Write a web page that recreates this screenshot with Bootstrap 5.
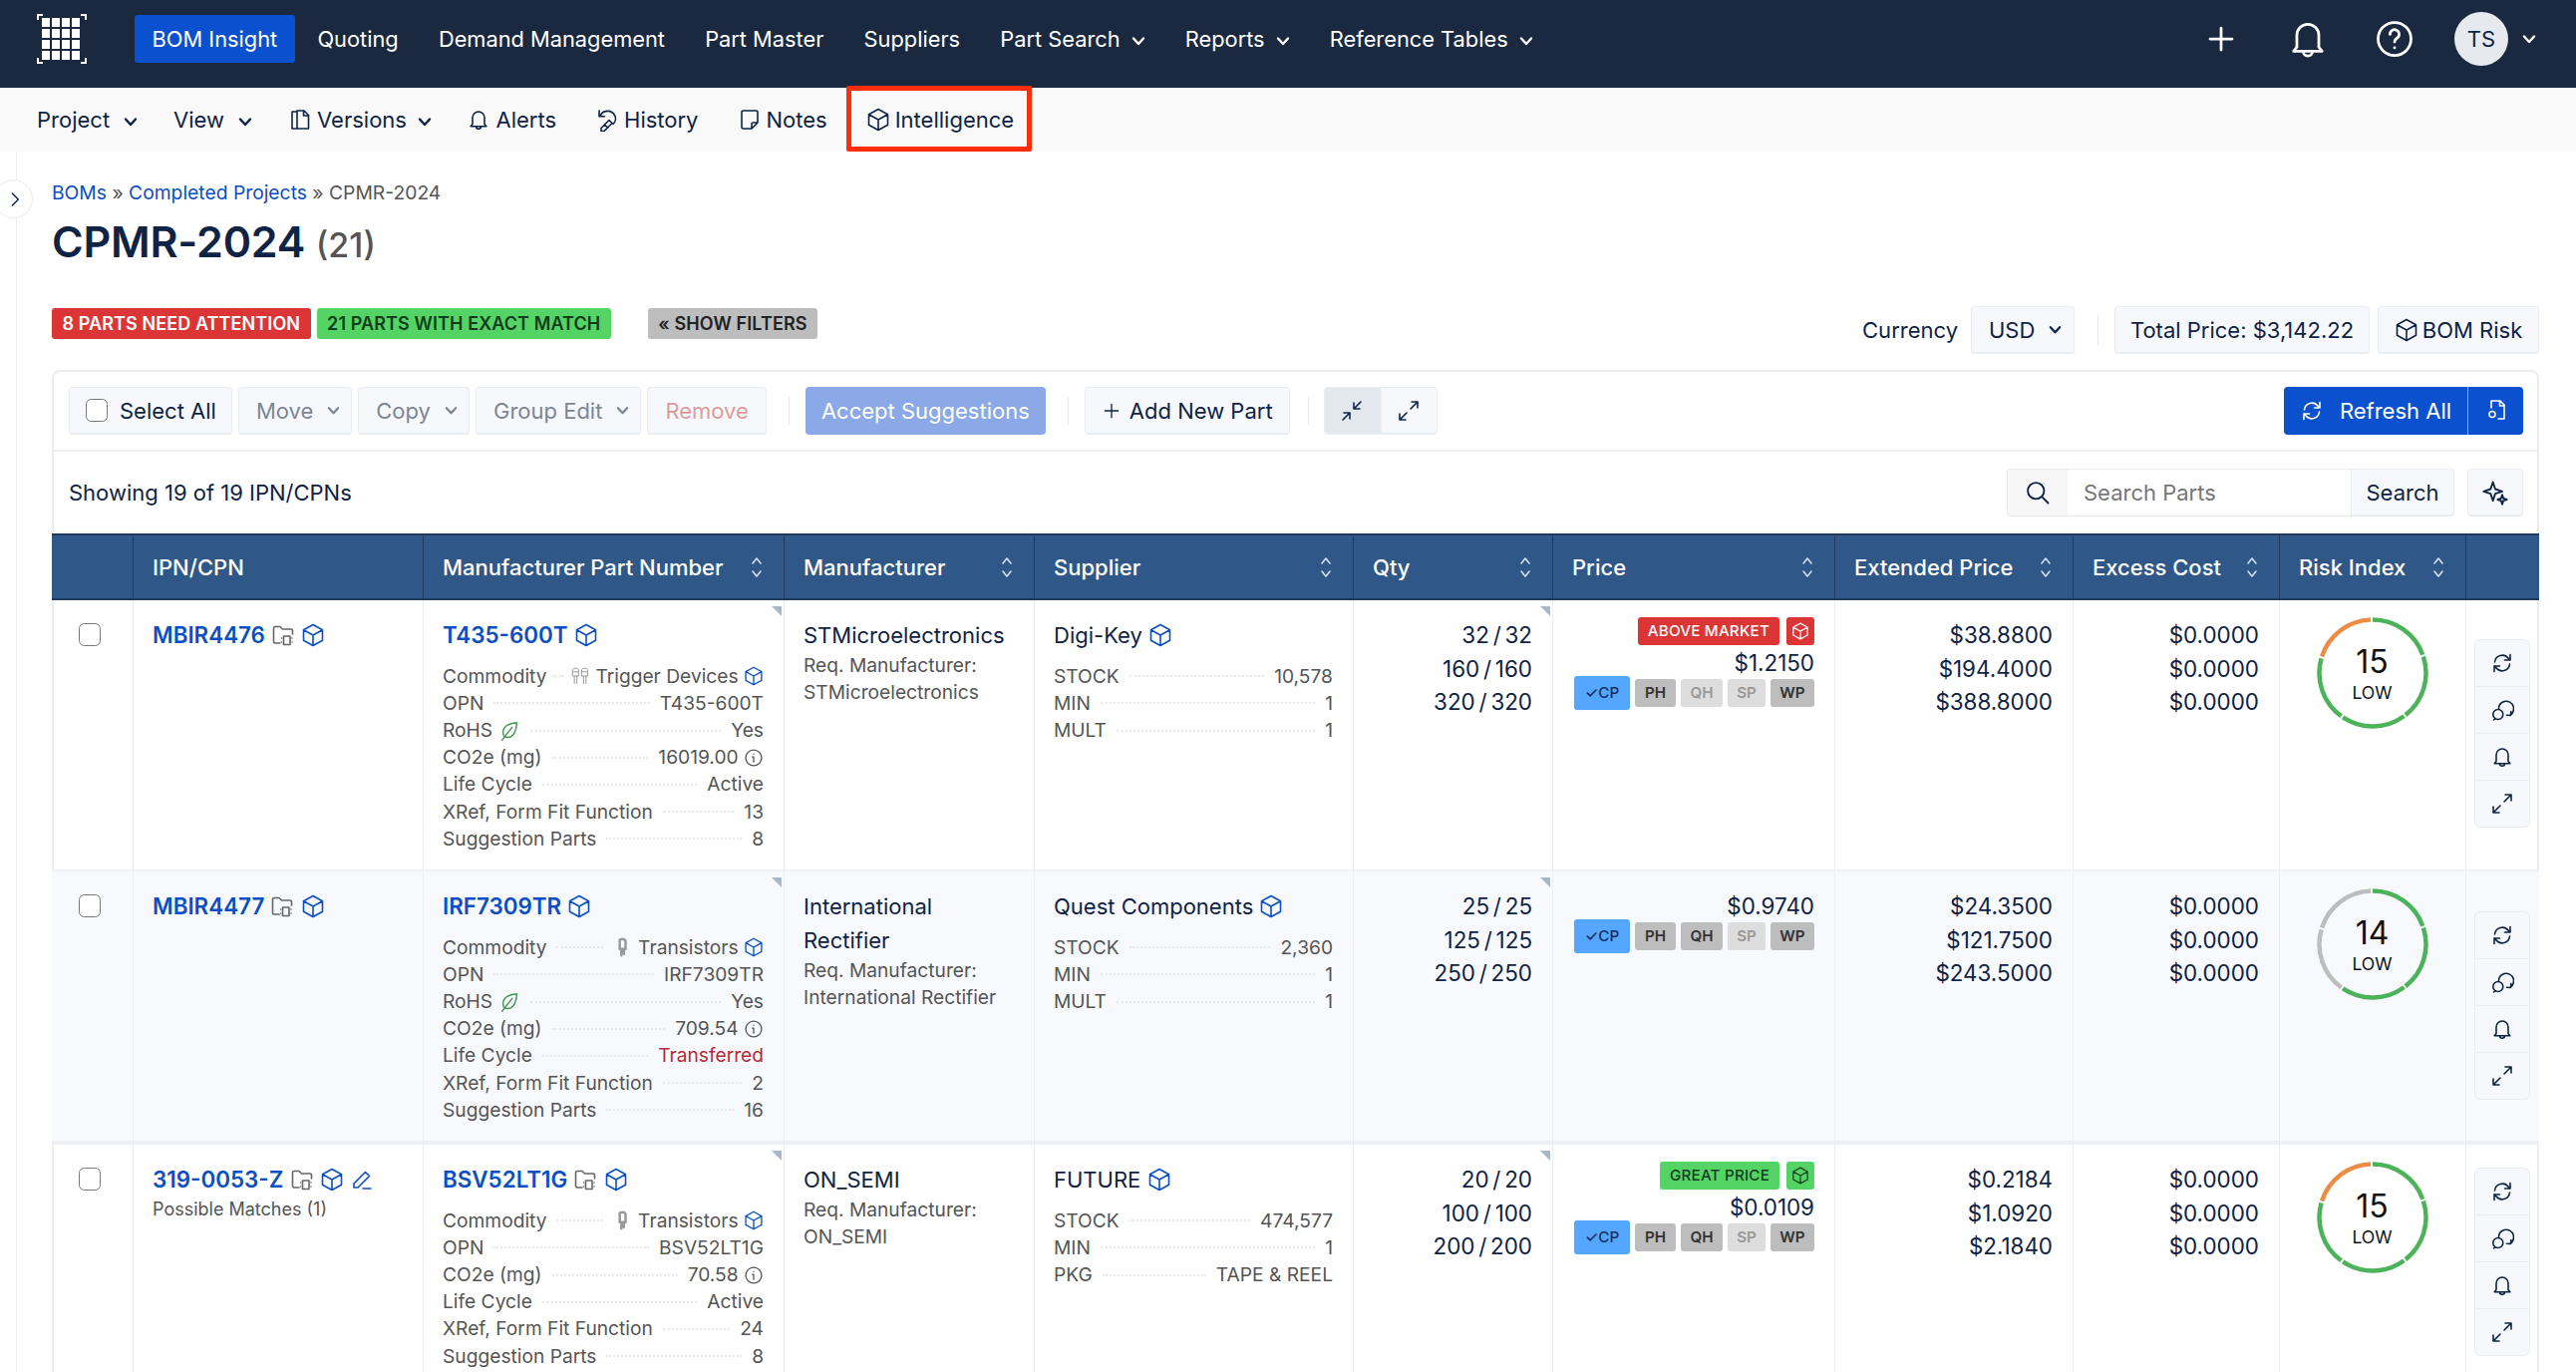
<!doctype html>
<html lang="en">
<head>
<meta charset="utf-8">
<title>CPMR-2024</title>
<link href="https://cdn.jsdelivr.net/npm/bootstrap@5.3.0/dist/css/bootstrap.min.css" rel="stylesheet">
<style>
html,body{height:100%;overflow:hidden}
body{font-family:Inter,"Liberation Sans",sans-serif;font-size:22px;color:#0f2344;background:#fff;line-height:34px}
.ic{width:24px;height:24px;fill:none;stroke:currentColor;stroke-width:1.6;stroke-linecap:round;stroke-linejoin:round;flex:none;vertical-align:-4px}
.chev{width:14px;height:14px;stroke-width:2.4;margin-left:11px;vertical-align:-1px}
.topbar{background:#1a2940;height:88px;padding:0 40px 10px 36px;flex-wrap:nowrap}
.logo-mark{width:52px;height:52px;margin-right:47px;fill:#fff;stroke:none}
.topbar .navbar-nav .nav-link{color:#fff;font-size:21.8px;padding:0 17.6px;margin-right:5px;height:48px;line-height:48px;font-weight:400;border-radius:3px;white-space:nowrap}
.topbar .navbar-nav .nav-link.active{background:#0b50cf;color:#fff}
.tool-ic{color:#fff;width:44px;height:44px;stroke-width:1.5;margin-right:43px}
.avatar-dot{width:54px;height:54px;background:#e6eaee;color:#0f2344;font-size:22px;font-weight:400;margin-left:-5px}
.topbar .chev-end{color:#fff;margin-left:14px}
.subbar{background:#f9f9f9;height:64px;padding-left:19px;flex-wrap:nowrap}
.subbar .nav-link{color:#0f2344;padding:0 18px;line-height:64px;white-space:nowrap}
.subbar .wide .nav-link{padding:0 19.5px}
.subbar .ic{margin-right:5px;width:24px;height:24px}
.subbar .chev{margin-right:0;width:14px;height:14px;margin-left:14px}
.subbar .ver .nav-link{padding-right:16px}
.subbar .ver .chev{margin-left:11px}
.intel{position:relative}
.subbar .intel .ic{margin-right:5px}
.intel::after{content:"";position:absolute;left:0;right:2px;top:-2px;bottom:0;border:5px solid #ff2d0a;border-radius:2px}
.rail-wrap{position:relative;height:calc(100vh - 152px);padding:29px 37px 0 52px}
.rail-line{position:absolute;left:16px;top:0;bottom:0;border-left:1px solid #eee}
.rail-tab{position:absolute;left:-6px;top:28px;width:39px;height:39px;background:#fff;border:1px solid #eaeaea;border-radius:50%;color:#0f2344}
.rail-tab .ic{width:16px;height:16px;stroke-width:2.2;margin-left:2px}
.crumbs{font-size:19.3px;line-height:24px;margin-bottom:10px;color:#555}
.crumbs a{color:#0b4fc4;text-decoration:none}
.page-title{font-size:43px;font-weight:600;line-height:54px;margin:0 0 34px;color:#0f2344;letter-spacing:-.2px}
.page-title span{font-size:34px;font-weight:500;color:#555;letter-spacing:0}
.mt-flags{margin-top:2px}
.flag{font-size:18px;line-height:31px;height:31px;padding:0 10.500px;border-radius:3px;font-weight:600;margin-right:6px;display:inline-block;letter-spacing:.1px;white-space:nowrap}
.flag-red{background:#dc3535;color:#fff}
.flag-green{background:#55d466;color:#123d1c}
.flag-gray{background:#bdbdbd;color:#222;padding:0 10.500px;margin-left:31px;margin-right:0}
.vsep{width:1px;height:30px;background:#e9e9e9;align-self:center;flex:none}
.btn-soft{background:#f6f8fc;border:1px solid #e9ecf1;border-bottom-width:2px;color:#0f2344;font-size:22px;height:48px;line-height:44px;padding:0 17px;border-radius:4px;white-space:nowrap;display:inline-flex;align-items:center}
.btn-soft:hover{background:#eef1f7;color:#0f2344}
.btn-soft .chev{margin-left:14px;margin-right:-6px;width:13px;height:13px}
.select-b{padding:0 15px 0 16px}
.add-b{padding:0 16px}
.add-b .ic{width:20px;height:20px}
.muted-b{color:#7d8695}
.danger-b{color:#df9b9b}
.accept-b{background:#8aa9e6;border-color:#8aa9e6;color:#fff;width:241px;justify-content:center}
.accept-b:hover{background:#8aa9e6;color:#fff}
.page-head{height:47px;margin-bottom:17px}
.cur-label{margin-right:5px}
.usd-b{width:104px}
.total-b{width:256px;justify-content:center}
.risk-b{width:162px;justify-content:center}
.head-sep{margin:0 8px 0 15px}
.tool-card{box-shadow:inset 0 0 0 2px #ececec;border-radius:8px 8px 0 0;overflow:hidden;height:1100px;margin:0}
.tool-row{padding:17px 16px 15px 17px;border-bottom:2px solid #eee;height:82px;gap:6px}
.tool-row .vsep{margin:0 10px 0 16px}
.tool-row .vsep.near{margin:0 9px 0 12px}
.search-row{height:82px;padding:0 16px 0 17px}
.sq-on{background:#e3e8ef}
.group-flush .btn-soft{border-radius:0;width:57px;padding:0;justify-content:center}
.group-flush .btn-soft:first-child{border-radius:4px 0 0 4px}
.group-flush .btn-soft:last-child{border-radius:0 4px 4px 0}
.refresh-main{background:#0b50cf;color:#fff;height:48px;font-size:22px;border:0;border-radius:4px 0 0 4px;width:184px;padding:0;display:inline-flex;align-items:center;justify-content:center;gap:16px}
.refresh-side{background:#0b50cf;color:#fff;height:48px;border:0;border-left:1px solid #8fb0ea;border-radius:0 4px 4px 0;width:56px;padding:0}
.refresh-main:hover,.refresh-side:hover{background:#0b50cf;color:#fff}
.search-group{width:449px;height:48px;flex-wrap:nowrap}
.search-group .input-group-text{background:#f7f7f7;border:1px solid #eaeaea;width:62px;justify-content:center;color:#0f2344;border-radius:4px 0 0 4px;padding:0}
.search-group .input-group-text .ic{width:28px;height:28px}
.search-group .form-control{border:1px solid #eaeaea;border-left:0;border-right:0;font-size:22px;padding:0 16px;color:#0f2344;border-radius:0}
.search-group .form-control::placeholder{color:#777}
.search-group .btn-soft{width:104px;padding:0;justify-content:center;border-radius:0 4px 4px 0}
.spark-b{width:56px;padding:0;justify-content:center;margin-left:13px}
.spark-b .ic{width:28px;height:28px}
.bom-grid{table-layout:fixed;width:2495px;border-collapse:separate;border-spacing:0;margin:0;color:#0f2344;--bs-table-bg:transparent}
.bom-grid thead th{background:#2f5888;color:#fff;height:67px;padding:0 21px 0 19.500px;font-weight:500;font-size:22px;border-top:2px solid #1e3a5f;border-bottom:2px solid #1e3a5f;border-right:1px solid #1e3a5f;vertical-align:middle;white-space:nowrap}
.bom-grid thead th:last-child{border-right:0}
.sort-ic{width:12px;height:26px;stroke:#cfe0f0;stroke-width:1.6;fill:none;stroke-linecap:round;stroke-linejoin:round;flex:none}
.bom-grid tbody td{padding:18px 19.500px 0 19.500px;border-right:1px solid #ebeef2;border-bottom:0;vertical-align:top;position:relative;font-size:22px;color:#0f2344;line-height:34px}
.bom-grid tbody td:last-child{border-right:0}
.bom-grid tbody tr.r-a td{height:272px;box-shadow:inset 0 -2px 0 #eef0f3}
.bom-grid tbody tr.r-b td{height:274px;background:#f7f9fd;box-shadow:inset 0 -4px 0 #eef0f3}
.bom-grid tbody tr.r-c td{height:240px}
.bom-grid tbody td.val-end{font-size:22.4px;line-height:33.700px}
.bom-grid tbody td.qty-cell{word-spacing:-2.500px}
.bom-grid tbody td.check-cell{padding-left:0;padding-right:0;text-align:center}
.pick{width:22px;height:23px;margin:5px 4px 0 0;border:1px solid #777;border-radius:4px;background:#fff;float:none}
.pick-all{width:22px;height:23px;margin:0 12px 0 0;border:1px solid #777;border-radius:4px}
a.part{color:#0b4fc4;font-weight:600;text-decoration:none;font-size:22.4px}
.blue-ic{color:#0b4fc4}
.folder-ic{color:#666}
.tip{position:absolute;top:6px;right:2px;width:0;height:0;border-top:10px solid #a9b8c6;border-left:10px solid transparent}
.spec-list{margin-top:10.5px}
.spec{display:flex;align-items:center;font-size:19.2px;line-height:27.2px;color:#555;white-space:nowrap}
.spec .dots{flex:1 1 auto;border-top:2px dotted #e8e8e8;margin:0 10px;min-width:8px}
.spec .dots.tight{margin:0 6px}
.spec .ic{width:20px;height:20px;vertical-align:-3px}
.spec .commod-ic{color:#999;stroke-width:1.2;margin-right:5px}
.spec .green-ic{color:#3f9a4f;margin-left:6px;width:22px;height:22px}
.spec .alert-val{color:#b52a37}
.sub-note{font-size:19.2px;line-height:27px;color:#555}
.poss{font-size:18px;line-height:26px;color:#555;margin-top:0}
.val-end{text-align:right}
.tag{font-size:15.2px;line-height:28px;height:28px;padding:0 10px;border-radius:3px;font-weight:500;letter-spacing:.2px;display:inline-block;white-space:nowrap}
.tag-sq{width:28px;height:28px;border-radius:3px;margin-left:7px;display:inline-flex;align-items:center;justify-content:center}
.tag-sq .ic{width:18px;height:18px}
.t-red{background:#dc3535;color:#fff}
.t-green{background:#55d466;color:#123d1c}
.tag-line{margin-top:-1px;margin-bottom:1px;height:28px}
.src-line{margin-top:-4px;gap:5px;align-items:center}
.src{font-size:15.2px;font-weight:600;height:28px;line-height:28px;border-radius:3px;text-align:center;color:#333;background:#bdbdbd}
.src.off{background:#ddd;color:#999}
.src.on{background:#55a6ff;color:#12305c;height:34px;line-height:34px;font-weight:500;width:56px;font-size:15.2px}
.s-ph{width:41px}.s-qh{width:42px}.s-sp{width:38px}.s-wp{width:44px}
.bom-grid tbody td.risk-cell{padding:17px 0 0}
.ring{position:relative;width:112px;height:112px;margin:0 auto;display:flex;flex-direction:column;align-items:center;color:#111}
.ring svg{position:absolute;inset:0;width:112px;height:112px;fill:none;stroke-width:4.5}
.ring b{font-weight:400;font-size:32px;line-height:40px;margin-top:25px}
.ring i{font-style:normal;font-size:17.6px;line-height:22px;margin-top:0}
.bom-grid tbody td.act-cell{padding:0 0 6px;text-align:center;vertical-align:middle}
.act-group{width:56px}
.act-group .btn{background:#f6f8fc;border:1px solid #e9ecf1;height:48px;padding:0;color:#0f2344;display:flex;align-items:center;justify-content:center}
.act-group .ic{width:24px;height:24px}
</style>
</head>
<body>
<svg width="0" height="0" class="position-absolute">
<symbol id="cube" viewBox="0 0 24 24"><path d="M12 1.500 21.500 6.800v10.400L12 22.500 2.500 17.200V6.800ZM2.500 6.800 12 12l9.500-5.200M12 12v10.500"/></symbol>
<symbol id="chev" viewBox="0 0 14 14"><path d="M2 4.500 7 10l5-5.500"/></symbol>
<symbol id="bell" viewBox="0 0 24 24"><path d="M6 16.500V10a6 6 0 0 1 12 0v6.500l1.800 2.300H4.200ZM9.500 18.800a2.500 2.500 0 0 0 5 0"/></symbol>
<symbol id="versions" viewBox="0 0 24 24"><path d="M9 3h7l4.500 4.500V21H9ZM15.500 3v5h5M8 4H4v17h4"/></symbol>
<symbol id="history" viewBox="0 0 24 24"><path d="M5 8.500A8 8 0 0 1 19.500 7.500c1.700 2.800 1 6.500-1.500 8.800M4 3v5.700h5.500M6 20.500l8-8 3 3-8 8H6ZM9.500 17l3 3"/></symbol>
<symbol id="notes" viewBox="0 0 24 24"><path d="M5.500 3h13a1.500 1.500 0 0 1 1.500 1.500V15l-6 6H5.500A1.500 1.500 0 0 1 4 19.500v-15A1.500 1.500 0 0 1 5.500 3ZM20 15h-5a1 1 0 0 0-1 1v5"/></symbol>
<symbol id="refresh" viewBox="0 0 24 24"><path d="M4.500 11a7.600 7.600 0 0 1 13.600-3.800L20 9M20 3.500V9h-5.500M19.500 13a7.600 7.600 0 0 1-13.600 3.800L4 15M4 20.500V15h5.500"/></symbol>
<symbol id="redo" viewBox="0 0 24 24"><path d="M8.500 10.500A7.500 7.500 0 1 1 20.500 16.800M16.500 17.300l4 .2.300-4"/><circle cx="7.800" cy="16.500" r="5"/><path d="M5 20.800 3.500 22"/></symbol>
<symbol id="expand" viewBox="0 0 24 24"><path d="M14 10l7-7M15 3h6v6M10 14l-7 7M3 15v6h6"/></symbol>
<symbol id="shrink" viewBox="0 0 24 24"><path d="M21 3l-7 7M14 4v6h6M3 21l7-7M4 14h6v6"/></symbol>
<symbol id="folder" viewBox="0 0 24 24"><path d="M9 20H4a1.500 1.500 0 0 1-1.500-1.500V5A1.500 1.500 0 0 1 4 3.500h5l2.500 2.500H20A1.500 1.500 0 0 1 21.500 7.500V11"/><rect x="12.500" y="13" width="6.500" height="8.500"/><path d="M10.500 15v.01M10.500 19v.01M21 15v.01M21 19v.01"/></symbol>
<symbol id="info" viewBox="0 0 24 24"><circle cx="12" cy="12" r="9.500"/><path d="M12 11v6M10.500 11H12M12 7.300v.2"/></symbol>
<symbol id="leaf" viewBox="0 0 24 24"><path d="M20 3C10 4 5 8 5 14c0 3 2 5 5 5 7 0 10-8 10-16ZM15 8 4 22"/></symbol>
<symbol id="pencil" viewBox="0 0 24 24"><path d="M15.500 4.500l4 4L8 20H4v-4ZM13 21h8"/></symbol>
<symbol id="trigger" viewBox="0 0 24 24"><path d="M3 4c1-2 6-2 7 0v8H3ZM5 12v9M8 12v9M3 7h7M14 4c1-2 6-2 7 0v8h-7ZM16 12v9M19 12v9M14 7h7"/></symbol>
<symbol id="transistor" viewBox="0 0 24 24"><path d="M8 3c3-1.500 7-1 7 2v9H8ZM10 14v8M13 14v6" stroke-width="3"/></symbol>
<symbol id="sort" viewBox="0 0 12 26"><path d="M2 9l4-5 4 5M2 17l4 5 4-5"/></symbol>
</svg>

<nav class="navbar navbar-expand topbar">
  <svg class="logo-mark" viewBox="0 0 52 52"><path d="M1 1h6v2H3v4H1ZM45 1h6v6h-2V3h-4ZM1 45h2v4h4v2H1ZM49 45h2v6h-6v-2h4Z"/><g><rect x="6" y="5" width="8" height="9"/><rect x="16" y="5" width="8" height="9"/><rect x="26" y="5" width="8" height="9"/><rect x="36" y="5" width="8" height="9"/><rect x="6" y="16" width="8" height="9"/><rect x="16" y="16" width="8" height="9"/><rect x="26" y="16" width="8" height="9"/><rect x="36" y="16" width="8" height="9"/><rect x="6" y="27" width="8" height="9"/><rect x="16" y="27" width="8" height="9"/><rect x="26" y="27" width="8" height="9"/><rect x="36" y="27" width="8" height="9"/><rect x="6" y="38" width="8" height="9"/><rect x="16" y="38" width="8" height="9"/><rect x="26" y="38" width="8" height="9"/><rect x="36" y="38" width="8" height="9"/></g></svg>
  <ul class="navbar-nav align-items-center me-auto">
    <li class="nav-item"><a class="nav-link active" href="#">BOM Insight</a></li>
    <li class="nav-item"><a class="nav-link" href="#">Quoting</a></li>
    <li class="nav-item"><a class="nav-link" href="#">Demand Management</a></li>
    <li class="nav-item"><a class="nav-link" href="#">Part Master</a></li>
    <li class="nav-item"><a class="nav-link" href="#">Suppliers</a></li>
    <li class="nav-item"><a class="nav-link" href="#">Part Search<svg class="ic chev"><use href="#chev"/></svg></a></li>
    <li class="nav-item"><a class="nav-link" href="#">Reports<svg class="ic chev"><use href="#chev"/></svg></a></li>
    <li class="nav-item"><a class="nav-link" href="#">Reference Tables<svg class="ic chev"><use href="#chev"/></svg></a></li>
  </ul>
  <div class="d-flex align-items-center">
    <svg class="ic tool-ic" viewBox="0 0 24 24"><path d="M12 6v12M6 12h12"/></svg>
    <svg class="ic tool-ic"><use href="#bell"/></svg>
    <svg class="ic tool-ic" viewBox="0 0 24 24"><circle cx="12" cy="12" r="9"/><path d="M9.500 9.500a2.500 2.500 0 1 1 3.800 2.100c-.9.600-1.300 1.100-1.300 2.100M12 16.800v.1"/></svg>
    <div class="avatar-dot rounded-circle d-flex align-items-center justify-content-center">TS</div>
    <svg class="ic chev chev-end"><use href="#chev"/></svg>
  </div>
</nav>

<ul class="nav subbar align-items-center">
  <li class="nav-item"><a class="nav-link" href="#">Project<svg class="ic chev"><use href="#chev"/></svg></a></li>
  <li class="nav-item"><a class="nav-link" href="#">View<svg class="ic chev"><use href="#chev"/></svg></a></li>
  <li class="nav-item ver"><a class="nav-link" href="#"><svg class="ic"><use href="#versions"/></svg>Versions<svg class="ic chev"><use href="#chev"/></svg></a></li>
  <li class="nav-item wide"><a class="nav-link" href="#"><svg class="ic"><use href="#bell"/></svg>Alerts</a></li>
  <li class="nav-item wide"><a class="nav-link" href="#"><svg class="ic"><use href="#history"/></svg>History</a></li>
  <li class="nav-item wide"><a class="nav-link" href="#"><svg class="ic"><use href="#notes"/></svg>Notes</a></li>
  <li class="nav-item wide intel"><a class="nav-link" href="#"><svg class="ic"><use href="#cube"/></svg>Intelligence</a></li>
</ul>

<main class="rail-wrap">
  <div class="rail-line"></div>
  <div class="rail-tab d-flex align-items-center justify-content-center"><svg class="ic" viewBox="0 0 24 24"><path d="M8 3l9 9-9 9"/></svg></div>

  <div class="crumbs"><a href="#">BOMs</a> » <a href="#">Completed Projects</a> » CPMR-2024</div>
  <h1 class="page-title">CPMR-2024 <span>(21)</span></h1>

  <div class="d-flex justify-content-between align-items-start page-head">
    <div class="d-flex align-items-center mt-flags">
      <span class="flag flag-red">8 PARTS NEED ATTENTION</span>
      <span class="flag flag-green">21 PARTS WITH EXACT MATCH</span>
      <span class="flag flag-gray">« SHOW FILTERS</span>
    </div>
    <div class="d-flex align-items-center gap-2">
      <span class="cur-label">Currency</span>
      <button class="btn btn-soft usd-b" type="button">USD<svg class="ic chev"><use href="#chev"/></svg></button>
      <span class="vsep head-sep"></span>
      <button class="btn btn-soft total-b" type="button">Total Price: $3,142.22</button>
      <button class="btn btn-soft risk-b" type="button"><svg class="ic me-1"><use href="#cube"/></svg>BOM Risk</button>
    </div>
  </div>

  <section class="tool-card">
    <div class="d-flex tool-row">
      <label class="btn btn-soft select-b"><input class="form-check-input pick-all" type="checkbox">Select All</label>
      <button class="btn btn-soft muted-b" type="button">Move<svg class="ic chev"><use href="#chev"/></svg></button>
      <button class="btn btn-soft muted-b" type="button">Copy<svg class="ic chev"><use href="#chev"/></svg></button>
      <button class="btn btn-soft muted-b" type="button">Group Edit<svg class="ic chev"><use href="#chev"/></svg></button>
      <button class="btn btn-soft danger-b" type="button">Remove</button>
      <span class="vsep"></span>
      <button class="btn btn-soft accept-b" type="button">Accept Suggestions</button>
      <span class="vsep"></span>
      <button class="btn btn-soft add-b" type="button"><svg class="ic me-2" viewBox="0 0 24 24"><path d="M12 4v16M4 12h16"/></svg>Add New Part</button>
      <span class="vsep near"></span>
      <div class="d-flex group-flush">
        <button class="btn btn-soft sq-on" type="button"><svg class="ic"><use href="#shrink"/></svg></button>
        <button class="btn btn-soft" type="button"><svg class="ic"><use href="#expand"/></svg></button>
      </div>
      <div class="d-flex ms-auto">
        <button class="btn refresh-main" type="button"><svg class="ic"><use href="#refresh"/></svg>Refresh All</button>
        <button class="btn refresh-side" type="button"><svg class="ic" viewBox="0 0 24 24"><path d="M10 3h6l4 4v14h-6M15.500 3v5H20M10 3H7v7"/><circle cx="8" cy="16.500" r="3"/></svg></button>
      </div>
    </div>
    <div class="d-flex align-items-center justify-content-between search-row">
      <span>Showing 19 of 19 IPN/CPNs</span>
      <div class="d-flex">
        <div class="input-group search-group">
          <span class="input-group-text"><svg class="ic" viewBox="0 0 24 24"><circle cx="10.500" cy="10.500" r="7"/><path d="M16 16l5 5"/></svg></span>
          <input class="form-control" type="text" placeholder="Search Parts">
          <button class="btn btn-soft" type="button">Search</button>
        </div>
        <button class="btn btn-soft spark-b" type="button"><svg class="ic" viewBox="0 0 24 24"><path d="M10 3l2 6 6 2-6 2-2 6-2-6-6-2 6-2ZM18 14l1 3 3 1-3 1-1 3-1-3-3-1 3-1Z"/></svg></button>
      </div>
    </div>

    <table class="table bom-grid">
      <colgroup><col style="width:81.500px"><col style="width:291px"><col style="width:362px"><col style="width:251px"><col style="width:320px"><col style="width:200px"><col style="width:283px"><col style="width:239px"><col style="width:207px"><col style="width:187px"><col style="width:73.500px"></colgroup>
      <thead><tr>
        <th></th>
        <th>IPN/CPN</th>
        <th><div class="d-flex justify-content-between align-items-center">Manufacturer Part Number<svg class="sort-ic"><use href="#sort"/></svg></div></th>
        <th><div class="d-flex justify-content-between align-items-center">Manufacturer<svg class="sort-ic"><use href="#sort"/></svg></div></th>
        <th><div class="d-flex justify-content-between align-items-center">Supplier<svg class="sort-ic"><use href="#sort"/></svg></div></th>
        <th><div class="d-flex justify-content-between align-items-center">Qty<svg class="sort-ic"><use href="#sort"/></svg></div></th>
        <th><div class="d-flex justify-content-between align-items-center">Price<svg class="sort-ic"><use href="#sort"/></svg></div></th>
        <th><div class="d-flex justify-content-between align-items-center">Extended Price<svg class="sort-ic"><use href="#sort"/></svg></div></th>
        <th><div class="d-flex justify-content-between align-items-center">Excess Cost<svg class="sort-ic"><use href="#sort"/></svg></div></th>
        <th><div class="d-flex justify-content-between align-items-center">Risk Index<svg class="sort-ic"><use href="#sort"/></svg></div></th>
        <th></th>
      </tr></thead>
      <tbody>
        <tr class="r-a">
          <td class="check-cell"><input class="form-check-input pick" type="checkbox"></td>
          <td><a class="part" href="#">MBIR4476</a> <svg class="ic folder-ic"><use href="#folder"/></svg> <svg class="ic blue-ic"><use href="#cube"/></svg></td>
          <td><span class="tip"></span><a class="part" href="#">T435-600T</a> <svg class="ic blue-ic"><use href="#cube"/></svg>
            <div class="spec-list">
              <div class="spec">Commodity<span class="dots tight"></span><svg class="ic commod-ic"><use href="#trigger"/></svg>Trigger Devices&nbsp;<svg class="ic blue-ic"><use href="#cube"/></svg></div>
              <div class="spec">OPN<span class="dots"></span>T435-600T</div>
              <div class="spec">RoHS<svg class="ic green-ic"><use href="#leaf"/></svg><span class="dots"></span>Yes</div>
              <div class="spec">CO2e (mg)<span class="dots"></span>16019.00&nbsp;<svg class="ic"><use href="#info"/></svg></div>
              <div class="spec">Life Cycle<span class="dots"></span>Active</div>
              <div class="spec">XRef, Form Fit Function<span class="dots"></span>13</div>
              <div class="spec">Suggestion Parts<span class="dots"></span>8</div>
            </div></td>
          <td>STMicroelectronics<div class="sub-note">Req. Manufacturer:<br>STMicroelectronics</div></td>
          <td>Digi-Key <svg class="ic blue-ic"><use href="#cube"/></svg>
            <div class="spec-list">
              <div class="spec">STOCK<span class="dots"></span>10,578</div>
              <div class="spec">MIN<span class="dots"></span>1</div>
              <div class="spec">MULT<span class="dots"></span>1</div>
            </div></td>
          <td class="val-end qty-cell"><span class="tip"></span>32 / 32<br>160 / 160<br>320 / 320</td>
          <td class="val-end">
            <div class="d-flex justify-content-end tag-line"><span class="tag t-red">ABOVE MARKET</span><span class="tag-sq t-red"><svg class="ic"><use href="#cube"/></svg></span></div>
            $1.2150
            <div class="d-flex justify-content-end src-line"><span class="src on">✓CP</span><span class="src s-ph">PH</span><span class="src off s-qh">QH</span><span class="src off s-sp">SP</span><span class="src s-wp">WP</span></div>
          </td>
          <td class="val-end">$38.8800<br>$194.4000<br>$388.8000</td>
          <td class="val-end">$0.0000<br>$0.0000<br>$0.0000</td>
          <td class="risk-cell"><div class="ring"><svg viewBox="0 0 112 112"><g transform="rotate(-90 56 56)"><circle cx="56" cy="56" r="53.500" stroke="#4db35a" stroke-dasharray="65.200 270.900"/><circle cx="56" cy="56" r="53.500" stroke="#4db35a" stroke-dasharray="65.200 270.900" transform="rotate(72 56 56)"/><circle cx="56" cy="56" r="53.500" stroke="#4db35a" stroke-dasharray="65.200 270.900" transform="rotate(144 56 56)"/><circle cx="56" cy="56" r="53.500" stroke="#4db35a" stroke-dasharray="65.200 270.900" transform="rotate(216 56 56)"/><circle cx="56" cy="56" r="53.500" stroke="#ed8c45" stroke-dasharray="65.200 270.900" transform="rotate(288 56 56)"/></g></svg><b>15</b><i>LOW</i></div></td>
          <td class="act-cell"><div class="btn-group-vertical act-group mx-auto"><button class="btn" type="button"><svg class="ic"><use href="#refresh"/></svg></button><button class="btn" type="button"><svg class="ic"><use href="#redo"/></svg></button><button class="btn" type="button"><svg class="ic"><use href="#bell"/></svg></button><button class="btn" type="button"><svg class="ic"><use href="#expand"/></svg></button></div></td>
        </tr>

        <tr class="r-b">
          <td class="check-cell"><input class="form-check-input pick" type="checkbox"></td>
          <td><a class="part" href="#">MBIR4477</a> <svg class="ic folder-ic"><use href="#folder"/></svg> <svg class="ic blue-ic"><use href="#cube"/></svg></td>
          <td><span class="tip"></span><a class="part" href="#">IRF7309TR</a> <svg class="ic blue-ic"><use href="#cube"/></svg>
            <div class="spec-list">
              <div class="spec">Commodity<span class="dots"></span><svg class="ic commod-ic"><use href="#transistor"/></svg>Transistors&nbsp;<svg class="ic blue-ic"><use href="#cube"/></svg></div>
              <div class="spec">OPN<span class="dots"></span>IRF7309TR</div>
              <div class="spec">RoHS<svg class="ic green-ic"><use href="#leaf"/></svg><span class="dots"></span>Yes</div>
              <div class="spec">CO2e (mg)<span class="dots"></span>709.54&nbsp;<svg class="ic"><use href="#info"/></svg></div>
              <div class="spec">Life Cycle<span class="dots"></span><span class="alert-val">Transferred</span></div>
              <div class="spec">XRef, Form Fit Function<span class="dots"></span>2</div>
              <div class="spec">Suggestion Parts<span class="dots"></span>16</div>
            </div></td>
          <td>International Rectifier<div class="sub-note">Req. Manufacturer:<br>International Rectifier</div></td>
          <td>Quest Components <svg class="ic blue-ic"><use href="#cube"/></svg>
            <div class="spec-list">
              <div class="spec">STOCK<span class="dots"></span>2,360</div>
              <div class="spec">MIN<span class="dots"></span>1</div>
              <div class="spec">MULT<span class="dots"></span>1</div>
            </div></td>
          <td class="val-end qty-cell"><span class="tip"></span>25 / 25<br>125 / 125<br>250 / 250</td>
          <td class="val-end">
            $0.9740
            <div class="d-flex justify-content-end src-line"><span class="src on">✓CP</span><span class="src s-ph">PH</span><span class="src s-qh">QH</span><span class="src off s-sp">SP</span><span class="src s-wp">WP</span></div>
          </td>
          <td class="val-end">$24.3500<br>$121.7500<br>$243.5000</td>
          <td class="val-end">$0.0000<br>$0.0000<br>$0.0000</td>
          <td class="risk-cell"><div class="ring"><svg viewBox="0 0 112 112"><g transform="rotate(-90 56 56)"><circle cx="56" cy="56" r="53.500" stroke="#4db35a" stroke-dasharray="65.200 270.900"/><circle cx="56" cy="56" r="53.500" stroke="#4db35a" stroke-dasharray="65.200 270.900" transform="rotate(72 56 56)"/><circle cx="56" cy="56" r="53.500" stroke="#4db35a" stroke-dasharray="65.200 270.900" transform="rotate(144 56 56)"/><circle cx="56" cy="56" r="53.500" stroke="#bdbdbd" stroke-dasharray="65.200 270.900" transform="rotate(216 56 56)"/><circle cx="56" cy="56" r="53.500" stroke="#bdbdbd" stroke-dasharray="65.200 270.900" transform="rotate(288 56 56)"/></g></svg><b>14</b><i>LOW</i></div></td>
          <td class="act-cell"><div class="btn-group-vertical act-group mx-auto"><button class="btn" type="button"><svg class="ic"><use href="#refresh"/></svg></button><button class="btn" type="button"><svg class="ic"><use href="#redo"/></svg></button><button class="btn" type="button"><svg class="ic"><use href="#bell"/></svg></button><button class="btn" type="button"><svg class="ic"><use href="#expand"/></svg></button></div></td>
        </tr>

        <tr class="r-c">
          <td class="check-cell"><input class="form-check-input pick" type="checkbox"></td>
          <td><a class="part" href="#">319-0053-Z</a> <svg class="ic folder-ic"><use href="#folder"/></svg> <svg class="ic blue-ic"><use href="#cube"/></svg> <svg class="ic blue-ic"><use href="#pencil"/></svg><div class="poss">Possible Matches (1)</div></td>
          <td><span class="tip"></span><a class="part" href="#">BSV52LT1G</a> <svg class="ic folder-ic"><use href="#folder"/></svg> <svg class="ic blue-ic"><use href="#cube"/></svg>
            <div class="spec-list">
              <div class="spec">Commodity<span class="dots"></span><svg class="ic commod-ic"><use href="#transistor"/></svg>Transistors&nbsp;<svg class="ic blue-ic"><use href="#cube"/></svg></div>
              <div class="spec">OPN<span class="dots"></span>BSV52LT1G</div>
              <div class="spec">CO2e (mg)<span class="dots"></span>70.58&nbsp;<svg class="ic"><use href="#info"/></svg></div>
              <div class="spec">Life Cycle<span class="dots"></span>Active</div>
              <div class="spec">XRef, Form Fit Function<span class="dots"></span>24</div>
              <div class="spec">Suggestion Parts<span class="dots"></span>8</div>
            </div></td>
          <td>ON_SEMI<div class="sub-note">Req. Manufacturer:<br>ON_SEMI</div></td>
          <td>FUTURE <svg class="ic blue-ic"><use href="#cube"/></svg>
            <div class="spec-list">
              <div class="spec">STOCK<span class="dots"></span>474,577</div>
              <div class="spec">MIN<span class="dots"></span>1</div>
              <div class="spec">PKG<span class="dots"></span>TAPE &amp; REEL</div>
            </div></td>
          <td class="val-end qty-cell"><span class="tip"></span>20 / 20<br>100 / 100<br>200 / 200</td>
          <td class="val-end">
            <div class="d-flex justify-content-end tag-line"><span class="tag t-green">GREAT PRICE</span><span class="tag-sq t-green"><svg class="ic"><use href="#cube"/></svg></span></div>
            $0.0109
            <div class="d-flex justify-content-end src-line"><span class="src on">✓CP</span><span class="src s-ph">PH</span><span class="src s-qh">QH</span><span class="src off s-sp">SP</span><span class="src s-wp">WP</span></div>
          </td>
          <td class="val-end">$0.2184<br>$1.0920<br>$2.1840</td>
          <td class="val-end">$0.0000<br>$0.0000<br>$0.0000</td>
          <td class="risk-cell"><div class="ring"><svg viewBox="0 0 112 112"><g transform="rotate(-90 56 56)"><circle cx="56" cy="56" r="53.500" stroke="#4db35a" stroke-dasharray="65.200 270.900"/><circle cx="56" cy="56" r="53.500" stroke="#4db35a" stroke-dasharray="65.200 270.900" transform="rotate(72 56 56)"/><circle cx="56" cy="56" r="53.500" stroke="#4db35a" stroke-dasharray="65.200 270.900" transform="rotate(144 56 56)"/><circle cx="56" cy="56" r="53.500" stroke="#4db35a" stroke-dasharray="65.200 270.900" transform="rotate(216 56 56)"/><circle cx="56" cy="56" r="53.500" stroke="#ed8c45" stroke-dasharray="65.200 270.900" transform="rotate(288 56 56)"/></g></svg><b>15</b><i>LOW</i></div></td>
          <td class="act-cell"><div class="btn-group-vertical act-group mx-auto"><button class="btn" type="button"><svg class="ic"><use href="#refresh"/></svg></button><button class="btn" type="button"><svg class="ic"><use href="#redo"/></svg></button><button class="btn" type="button"><svg class="ic"><use href="#bell"/></svg></button><button class="btn" type="button"><svg class="ic"><use href="#expand"/></svg></button></div></td>
        </tr>
      </tbody>
    </table>
  </section>
</main>
<script src="https://cdn.jsdelivr.net/npm/bootstrap@5.3.0/dist/js/bootstrap.bundle.min.js"></script>
</body>
</html>
